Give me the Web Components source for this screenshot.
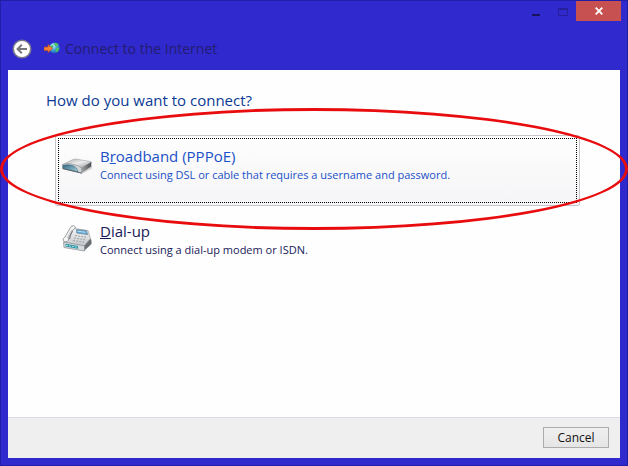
<!DOCTYPE html>
<html lang="en">
<head>
<meta charset="utf-8">
<meta name="viewport" content="width=device-width, initial-scale=1">
<title>Connect to the Internet</title>
<style>
    body {
        margin: 0;
        min-height: 100vh;
        display: flex;
        font-family: "Open Sans", "Noto Sans", sans-serif;
        font-size: 12px;
        line-height: 16px;
        overflow: hidden;
    }
</style>
</head>
<body>

<wizard-window>
    <window-controls slot="controls"></window-controls>
    <wizard-header slot="header">Connect to the Internet</wizard-header>
    <connection-list heading="How do you want to connect?">
        <command-link focused>
            <modem-icon slot="icon"></modem-icon>
            <span slot="title">B<u>r</u>oadband (PPPoE)</span>
            <span slot="note">Connect using DSL or cable that requires a username and password.</span>
            <red-circle slot="mark"></red-circle>
        </command-link>
        <command-link>
            <phone-icon slot="icon"></phone-icon>
            <span slot="title"><u>D</u>ial-up</span>
            <span slot="note">Connect using a dial-up modem or ISDN.</span>
        </command-link>
    </connection-list>
    <push-button slot="footer">Cancel</push-button>
</wizard-window>

<script>
class WizardWindow extends HTMLElement {
    constructor() {
        super()
        this.shadow = this.attachShadow({ mode: 'open' });
    }

    connectedCallback() {
        this.shadow.innerHTML = `
            <style>
                :host {
                    flex: 1;
                    display: flex;
                    flex-direction: column;
                    box-sizing: border-box;
                    padding: 0 7px 7px;
                    background-color: #3029cd;
                    border: 1px solid #241da6;
                }
                .controls {
                    display: flex;
                    justify-content: flex-end;
                    margin-right: -1px;
                }
                .header {
                    flex: none;
                    height: 49px;
                }
                main {
                    flex: 1;
                    background-color: #fefefe;
                }
                footer {
                    display: flex;
                    justify-content: flex-end;
                    padding: 9px 11px 10px;
                    background-color: #f0eff0;
                    border-top: 1px solid #dcdbe3;
                }
            </style>
            <div class="controls"><slot name="controls"></slot></div>
            <div class="header"><slot name="header"></slot></div>
            <main><slot></slot></main>
            <footer><slot name="footer"></slot></footer>
        `
    }
}

customElements.define("wizard-window", WizardWindow)

class WindowControls extends HTMLElement {
    constructor() {
        super()
        this.shadow = this.attachShadow({ mode: 'open' });
    }

    connectedCallback() {
        this.shadow.innerHTML = `
            <style>
                :host {
                    display: flex;
                }
                button {
                    width: 27px;
                    height: 20px;
                    padding: 0;
                    border: 0;
                    background: none;
                    display: grid;
                    place-items: center;
                }
                .close {
                    width: 45px;
                    background-color: #c75050;
                }
                svg {
                    display: block;
                }
            </style>
            <button aria-label="Minimize">
                <svg width="10" height="9"><path d="M1 7h8v2H1z" fill="#17145c"/></svg>
            </button>
            <button aria-label="Maximize" disabled>
                <svg width="10" height="9"><path d="M.5 1.5h9v7h-9zM0 2.5h10" fill="none" stroke="#251f9c"/></svg>
            </button>
            <button class="close" aria-label="Close">
                <svg width="8" height="8"><path d="M.7.7l6.6 6.6M7.3.7L.7 7.3" stroke="#fff" stroke-width="1.8"/></svg>
            </button>
        `
    }
}

customElements.define("window-controls", WindowControls)

class WizardHeader extends HTMLElement {
    constructor() {
        super()
        this.shadow = this.attachShadow({ mode: 'open' });
    }

    connectedCallback() {
        this.shadow.innerHTML = `
            <style>
                :host {
                    display: flex;
                    align-items: center;
                    padding: 18px 4px 0;
                }
                button {
                    width: 20px;
                    height: 20px;
                    padding: 0;
                    border: 0;
                    background: none;
                }
                svg {
                    display: block;
                }
                .globe {
                    margin: 0 5px 0 12px;
                }
                h1 {
                    margin: 0;
                    font-size: 14px;
                    line-height: 20px;
                    font-weight: 400;
                    color: #231d70;
                }
            </style>
            <button aria-label="Back">
                <svg width="20" height="20" viewBox="0 0 20 20">
                    <circle cx="10" cy="10" r="8.8" fill="#fff" stroke="#77778c" stroke-width="1.6"/>
                    <path d="M15 10H6M9.8 5.8L5.6 10l4.2 4.2" fill="none" stroke="#77777c" stroke-width="2"/>
                </svg>
            </button>
            <svg class="globe" width="16" height="14" viewBox="0 0 16 14">
                <defs>
                    <radialGradient id="sea" cx=".35" cy=".3" r=".8">
                        <stop offset="0" stop-color="#c7f2ff"/>
                        <stop offset=".5" stop-color="#3e9fe2"/>
                        <stop offset="1" stop-color="#1551a8"/>
                    </radialGradient>
                </defs>
                <circle cx="10.5" cy="6" r="5.3" fill="url(#sea)"/>
                <path d="M10 1q3-1 4.500 1.500l-1 2-2-.5-1.500-1.500zM12 6l3-.5q.5 3-2 5l-1.800-2zM6 4l3-1 .5 2L7 7z" fill="#4cc267"/>
                <path d="M0 5h4V2.500L8.500 6.500 4 10.500V8.500H0z" fill="#f58237" stroke="#b94a22" stroke-width=".7"/>
            </svg>
            <h1><slot></slot></h1>
        `
    }
}

customElements.define("wizard-header", WizardHeader)

class ConnectionList extends HTMLElement {
    constructor() {
        super()
        this.shadow = this.attachShadow({ mode: 'open' });
    }

    connectedCallback() {
        this.shadow.innerHTML = `
            <style>
                :host {
                    display: block;
                    padding: 20px 40px 0 38px;
                }
                h2 {
                    margin: 0 0 25px;
                    font-size: 15px;
                    line-height: 20px;
                    font-weight: 400;
                    color: #0b3a94;
                }
                .links {
                    display: flex;
                    flex-direction: column;
                    gap: 4px;
                    padding-left: 9px;
                }
            </style>
            <h2>${this.getAttribute("heading")}</h2>
            <div class="links"><slot></slot></div>
        `
    }
}

customElements.define("connection-list", ConnectionList)

class CommandLink extends HTMLElement {
    constructor() {
        super()
        this.shadow = this.attachShadow({ mode: 'open' });
    }

    connectedCallback() {
        this.shadow.innerHTML = `
            <style>
                :host {
                    display: block;
                    position: relative;
                    color: #191958;
                }
                :host([focused]) {
                    color: #1a51c6;
                    z-index: 1;
                }
                button {
                    display: block;
                    width: 100%;
                    padding: 2px;
                    border: 1px solid transparent;
                    border-radius: 2px;
                    background: none;
                    color: inherit;
                    font: inherit;
                    text-align: left;
                }
                :host([focused]) button {
                    border-color: #c6c6ca;
                    background: linear-gradient(#fefefe, #f5f4f6);
                }
                .inner {
                    display: flex;
                    gap: 8px;
                    padding: 7px 3px 18px;
                    border: 1px dotted transparent;
                }
                :host([focused]) .inner {
                    border-color: #000;
                }
                .icon {
                    flex: none;
                    width: 30px;
                    padding-top: 4px;
                }
                .title {
                    display: block;
                    font-size: 15px;
                    line-height: 20px;
                }
                .note {
                    display: block;
                    font-size: 11px;
                    line-height: 18px;
                }
            </style>
            <button>
                <span class="inner">
                    <span class="icon"><slot name="icon"></slot></span>
                    <span>
                        <span class="title"><slot name="title"></slot></span>
                        <span class="note"><slot name="note"></slot></span>
                    </span>
                </span>
            </button>
            <slot name="mark"></slot>
        `
    }
}

customElements.define("command-link", CommandLink)

class ModemIcon extends HTMLElement {
    constructor() {
        super()
        this.shadow = this.attachShadow({ mode: 'open' });
    }

    connectedCallback() {
        this.shadow.innerHTML = `
            <style>
                :host, svg {
                    display: block;
                }
            </style>
            <svg width="30" height="30" viewBox="0 0 30 30" aria-hidden="true">
                <defs>
                    <linearGradient id="top" x1="0" y1="0" x2="1" y2="1">
                        <stop offset="0" stop-color="#a6a9ac"/>
                        <stop offset=".5" stop-color="#ececec"/>
                        <stop offset="1" stop-color="#8f9193"/>
                    </linearGradient>
                    <linearGradient id="side" x1="0" y1="0" x2="1" y2="0">
                        <stop offset="0" stop-color="#a2a4a5"/>
                        <stop offset="1" stop-color="#4c4f51"/>
                    </linearGradient>
                    <linearGradient id="glass" x1="0" y1="0" x2="1" y2="1">
                        <stop offset="0" stop-color="#2f6681"/>
                        <stop offset="1" stop-color="#a9d4de"/>
                    </linearGradient>
                </defs>
                <path d="M18 23.500L30 16v2.500L19 24.500z" fill="#d2d2d4"/>
                <path d="M.5 14.500L11 9.500q1.500-.7 3-.4L28.500 11.500q1.500.5.500 1.500L20 18z" fill="url(#top)" stroke="#97999b" stroke-width=".5"/>
                <path d="M19.500 17.500l9.800-5.500v4.500L19.500 23z" fill="url(#side)"/>
                <path d="M.5 14.500q4-1.500 9-.5 7 1 10 4V23L.5 18.500z" fill="#d3d6d8" stroke="#7f8589" stroke-width=".6"/>
                <path d="M1 18.300V15.600q4-1.600 8.500-.4 5.500 1.500 6.500 6.500z" fill="url(#glass)" stroke="#315d72" stroke-width=".5"/>
                <path d="M.8 18.700l18.500 4.300" stroke="#52616a" stroke-width=".9"/>
            </svg>
        `
    }
}

customElements.define("modem-icon", ModemIcon)

class PhoneIcon extends HTMLElement {
    constructor() {
        super()
        this.shadow = this.attachShadow({ mode: 'open' });
    }

    connectedCallback() {
        this.shadow.innerHTML = `
            <style>
                :host, svg {
                    display: block;
                }
            </style>
            <svg width="30" height="30" viewBox="0 0 30 30" aria-hidden="true">
                <defs>
                    <linearGradient id="base" x1="0" y1="0" x2="0" y2="1">
                        <stop offset="0" stop-color="#f6f6f6"/>
                        <stop offset="1" stop-color="#c4c7ca"/>
                    </linearGradient>
                </defs>
                <path d="M21 20l7-6.500q1.500.5 1.500 2.500V19L22 26z" fill="#6a6d71"/>
                <path d="M3 16l6-13 17 2.500 2.500 8-6.500 7.500L2 18z" fill="url(#base)" stroke="#999da0" stroke-width=".7"/>
                <path d="M1.500 17L22.500 20.800v5.200L2 22.500z" fill="#d5dadd" stroke="#858b8f" stroke-width=".7"/>
                <path d="M3.500 18.800l12.500 2.200v2.800l-12.500-2.200z" fill="#2c91a5"/>
                <path d="M4 20.300l11.500 2" stroke="#a4e8ea" stroke-dasharray="2 1"/>
                <path d="M14.500 4.500l10 1.300 1.200 3.800-11-1.600z" fill="#62a6d6" stroke="#5f7788" stroke-width=".6"/>
                <path d="M15.500 6.200l8 1.100" stroke="#b9dff4"/>
                <path d="M13 10.500l11 1.600M12 13l11 1.600M11 15.500l11 1.600" fill="none" stroke="#9da2a7" stroke-width="1.1" stroke-dasharray="2 1.2"/>
                <path d="M9 1.500q3-2 4.500.5-.3 2-2.500 3L6.500 13q.5 2.500-1.500 3.500-3 1.500-4-1.500 0-2 2-3z" fill="#f6f6f7" stroke="#85898d" stroke-width=".8"/>
                <path d="M10 4.500L5 13" stroke="#c2c5c8"/>
                <path d="M7.500 14l1-4 2-4" fill="none" stroke="#777b80" stroke-width="1.1"/>
            </svg>
        `
    }
}

customElements.define("phone-icon", PhoneIcon)

// ring drawn over the option, wider than the window content
class RedCircle extends HTMLElement {
    constructor() {
        super()
        this.shadow = this.attachShadow({ mode: 'open' });
    }

    connectedCallback() {
        this.shadow.innerHTML = `
            <style>
                :host {
                    position: absolute;
                    inset: -27px -48px -24px -55px;
                    pointer-events: none;
                    border: 3px solid #e80c0e;
                    border-radius: 50%;
                }
            </style>
        `
    }
}

customElements.define("red-circle", RedCircle)

class PushButton extends HTMLElement {
    constructor() {
        super()
        this.shadow = this.attachShadow({ mode: 'open' });
    }

    connectedCallback() {
        this.shadow.innerHTML = `
            <style>
                :host {
                    display: block;
                }
                button {
                    display: block;
                    min-width: 66px;
                    height: 21px;
                    padding: 0 8px;
                    border: 1px solid #acacac;
                    background: linear-gradient(#f1f0f1, #e6e5e6);
                    color: #111;
                    font: inherit;
                }
            </style>
            <button><slot></slot></button>
        `
    }
}

customElements.define("push-button", PushButton)
</script>
</body>
</html>
